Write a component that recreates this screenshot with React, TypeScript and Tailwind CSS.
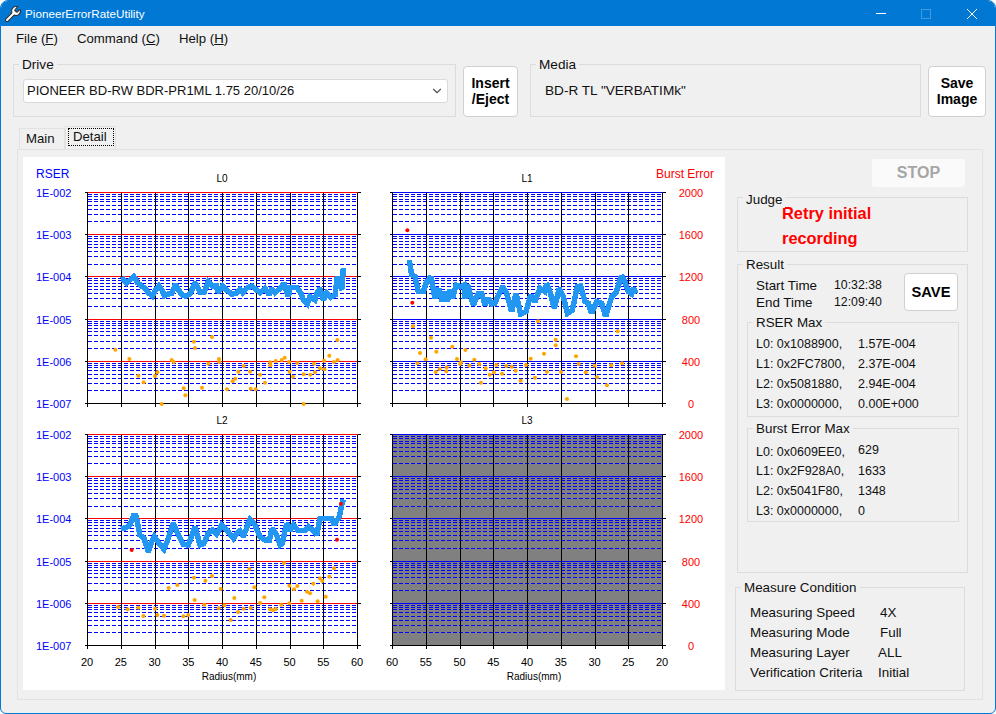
import { ChevronDown, Wrench } from 'lucide-react';
import type { ReactNode } from 'react';

type Pt = [number, number];

// traced from the capture at 3x, so each list is scaled back by its origin
const line0: Pt[] = [[303,360],[310,358],[320,370],[330,360],[342,350],[352,368],[365,378],[375,385],[385,398],[397,408],[407,390],[417,378],[427,392],[433,408],[445,402],[455,400],[467,372],[477,392],[487,405],[497,408],[510,402],[525,368],[535,385],[540,398],[552,398],[565,365],[577,378],[590,378],[593,398],[608,378],[620,390],[635,402],[650,400],[660,388],[668,398],[680,385],[695,378],[710,390],[720,398],[735,385],[748,405],[755,385],[765,398],[780,385],[792,370],[805,410],[810,382],[830,382],[843,400],[850,420],[862,432],[870,410],[885,420],[890,400],[900,385],[910,420],[920,400],[932,412],[945,405],[952,350],[965,390],[970,325]];
const line1: Pt[] = [[118,300],[125,345],[135,350],[145,395],[160,395],[170,365],[183,350],[195,415],[207,385],[217,425],[225,395],[232,425],[240,390],[248,415],[258,375],[272,380],[282,375],[285,415],[293,375],[310,435],[325,400],[335,400],[345,435],[355,415],[365,432],[375,430],[385,405],[398,380],[410,400],[425,455],[438,400],[452,462],[468,455],[482,405],[495,425],[510,385],[525,395],[530,370],[540,395],[553,445],[568,385],[580,410],[592,460],[607,450],[622,380],[632,378],[645,425],[655,430],[665,460],[680,425],[695,430],[707,470],[725,410],[737,400],[755,347],[765,365],[775,395],[785,402],[790,385],[798,400]];
const line2: Pt[] = [[303,357],[320,352],[330,345],[340,318],[348,318],[360,375],[372,385],[385,425],[395,395],[403,380],[415,398],[432,418],[445,385],[460,340],[475,375],[490,403],[505,405],[525,350],[540,405],[552,400],[565,368],[578,360],[590,372],[605,345],[620,360],[640,385],[650,370],[660,362],[670,380],[690,328],[705,345],[720,380],[735,390],[748,390],[757,355],[770,375],[780,405],[787,400],[800,340],[810,362],[820,345],[835,362],[855,362],[865,350],[880,362],[890,375],[900,325],[915,325],[935,325],[942,345],[958,320],[965,285],[970,268]];

const dots0: Pt[] = [[286,569],[328,597],[355,647],[371,667],[405,648],[412,637],[425,732],[455,600],[461,606],[491,685],[496,706],[522,545],[525,564],[546,683],[565,611],[576,531],[597,597],[598,606],[621,688],[638,664],[646,656],[655,635],[671,618],[690,635],[692,686],[707,688],[720,644],[735,668],[751,607],[751,616],[767,603],[785,600],[794,593],[807,606],[809,635],[819,650],[832,609],[851,643],[851,732],[871,644],[882,611],[885,637],[900,625],[912,602],[913,628],[928,587],[942,606],[952,540],[953,600]];
const dots1: Pt[] = [[129,499],[150,579],[142,610],[167,598],[183,533],[199,575],[197,636],[209,627],[230,622],[229,634],[247,560],[261,597],[273,607],[270,612],[286,570],[298,617],[313,599],[328,612],[347,625],[333,668],[359,644],[372,637],[379,615],[396,641],[409,618],[425,620],[437,632],[452,662],[468,615],[482,596],[495,653],[504,484],[522,581],[531,635],[557,539],[557,556],[573,636],[591,717],[618,589],[626,612],[647,637],[674,617],[681,652],[711,676],[724,616],[743,514],[756,610]];
const dots2: Pt[] = [[294,591],[323,598],[355,593],[370,618],[405,596],[412,615],[432,617],[446,534],[472,525],[490,619],[505,615],[522,503],[524,570],[553,584],[556,512],[576,498],[596,595],[602,537],[613,586],[632,630],[643,564],[654,606],[671,596],[688,477],[692,594],[703,532],[720,579],[733,562],[750,598],[759,601],[767,597],[784,584],[792,459],[808,527],[808,580],[822,538],[832,528],[845,572],[861,545],[870,550],[880,521],[893,574],[900,505],[907,513],[917,560],[928,500],[942,475]];

const rserLabels = ['1E-002', '1E-003', '1E-004', '1E-005', '1E-006', '1E-007'];
const burstLabels = ['2000', '1600', '1200', '800', '400', '0'];
const minor = [2, 3, 4, 5, 6, 7, 8, 9];
const font = '"Liberation Sans", Arial, sans-serif';

type ChartProps = {
  title: string;
  // page position of the svg cell
  box: [number, number, number, number];
  plot: { x: number; y: number };
  origin: Pt;
  side: 'left' | 'right';
  ticks: number[];
  decadeColor: string;
  fill?: string;
  line?: Pt[];
  dots?: Pt[];
  red?: Pt[];
  radiusLabel?: boolean;
  heading?: ReactNode;
};

const Chart = ({ title, box, plot, origin, side, ticks, decadeColor, fill, line, dots, red, radiusLabel, heading }: ChartProps) => {
  const W = 270;
  const H = 211;
  const dec = H / 5;
  const sx = (v: number) => origin[0] + v / 3;
  const sy = (v: number) => origin[1] + v / 3;
  const yAt = (i: number) => Math.round(plot.y + i * dec) + 0.5;
  const xAt = (i: number) => Math.round(plot.x + (i * W) / 8) + 0.5;
  const bottom = yAt(5);
  const right = xAt(8);
  const left = xAt(0);

  return (
    <svg
      className="block"
      width={box[2]}
      height={box[3]}
      viewBox={box.join(' ')}
      fontFamily={font}
    >
      <text x={plot.x + 135} y={plot.y - 10.5} fontSize="10" textAnchor="middle" fill="#000">{title}</text>
      {heading}
      {fill && <rect x={left} y={yAt(0)} width={right - left} height={bottom - yAt(0)} fill={fill} />}
      <g shapeRendering="crispEdges">
        {[0, 1, 2, 3, 4].map((d) =>
          minor.map((k) => {
            const y = Math.round(plot.y + (d + 1) * dec - dec * Math.log10(k)) + 0.5;
            return <line key={`${d}-${k}`} x1={left} x2={right} y1={y} y2={y} stroke="#0000ff" strokeDasharray="4 2" />;
          })
        )}
        {[0, 1, 2, 3, 4].map((d) => (
          <line key={d} x1={left} x2={right} y1={yAt(d)} y2={yAt(d)} stroke={decadeColor} />
        ))}
        {[0, 1, 2, 3, 4, 5, 6, 7, 8].map((i) => (
          <line key={i} x1={xAt(i)} x2={xAt(i)} y1={yAt(0)} y2={bottom + 3} stroke="#000" />
        ))}
        <line x1={left - 3} x2={right + 3} y1={bottom} y2={bottom} stroke="#000" />
        {[0, 1, 2, 3, 4].map((d) => (
          <g key={d}>
            <line x1={left - 3} x2={left} y1={yAt(d)} y2={yAt(d)} stroke="#000" />
            <line x1={right} x2={right + 3} y1={yAt(d)} y2={yAt(d)} stroke="#000" />
          </g>
        ))}
      </g>
      {line && (
        <polyline
          points={line.map(([a, b]) => `${sx(a)},${sy(b)}`).join(' ')}
          fill="none"
          stroke="#2196f3"
          strokeWidth="5.5"
          strokeLinejoin="miter"
          strokeMiterlimit="2"
          shapeRendering="crispEdges"
        />
      )}
      {dots?.map(([a, b], i) => <circle key={i} cx={sx(a)} cy={sy(b)} r="2" fill="#ffa500" />)}
      {red?.map(([a, b], i) => <circle key={i} cx={sx(a)} cy={sy(b)} r="2" fill="#ff0000" />)}
      {side === 'left'
        ? rserLabels.map((t, i) => (
            <text key={t} x={36} y={yAt(i) + 4} fontSize="11" fill="#0000ff">{t}</text>
          ))
        : burstLabels.map((t, i) => (
            <text key={t} x={691} y={yAt(i) + 4} fontSize="11" fill="#ff0000" textAnchor="middle">{t}</text>
          ))}
      {radiusLabel &&
        ticks.map((t, i) => (
          <text key={t} x={plot.x + (i * W) / 8} y={665.5} fontSize="11" textAnchor="middle" fill="#000">{t}</text>
        ))}
      {radiusLabel && (
        <text x={plot.x + 142} y={679.5} fontSize="10" textAnchor="middle" fill="#000">Radius(mm)</text>
      )}
    </svg>
  );
};

const Group = ({ label, className, labelClass, children }: { label: string; className: string; labelClass?: string; children?: ReactNode }) => (
  <div className={`relative border border-[#dcdcdc] ${className}`}>
    <span className={`absolute left-[5px] bg-[#f0f0f0] px-[3px] leading-[16px] ${labelClass ?? '-top-[8px]'}`}>{label}</span>
    {children}
  </div>
);

const Underlined = ({ a, k }: { a: string; k: string }) => (
  <span>
    {a} (<span className="underline">{k}</span>)
  </span>
);

const PushButton = ({ className, children }: { className: string; children: ReactNode }) => (
  <button className={`flex items-center justify-center rounded-[4px] border border-[#d0d0d0] bg-white font-bold text-black ${className}`}>
    {children}
  </button>
);

const rser = [
  ['L0: 0x1088900,', '1.57E-004'],
  ['L1: 0x2FC7800,', '2.37E-004'],
  ['L2: 0x5081880,', '2.94E-004'],
  ['L3: 0x0000000,', '0.00E+000'],
];
const burst = [
  ['L0: 0x0609EE0,', '629'],
  ['L1: 0x2F928A0,', '1633'],
  ['L2: 0x5041F80,', '1348'],
  ['L3: 0x0000000,', '0'],
];
const measure = [
  ['Measuring Speed', '4X', 'w-[130px]'],
  ['Measuring Mode', 'Full', 'w-[130px]'],
  ['Measuring Layer', 'ALL', 'w-[128px]'],
  ['Verification Criteria', 'Initial', 'w-[128px]'],
];

const App = () => {
  return (
    <div
      className="flex h-[714px] w-[996px] flex-col overflow-hidden rounded-t-[8px] rounded-b-[6px] border border-[#0078d4] bg-[#f0f0f0] text-[13px] text-[#111]"
      style={{ fontFamily: font }}
    >
      <div className="flex h-[25px] shrink-0 items-center bg-[#0078d4] text-white">
        <Wrench size={18} className="ml-[3px] fill-white text-[#333]" strokeWidth={1.5} />
        <span className="ml-[3px] text-[11.7px]">PioneerErrorRateUtility</span>
        <div className="ml-auto flex items-center">
          <span className="mr-[35px] h-px w-[10px] bg-white" />
          <span className="mr-[36px] h-[10px] w-[10px] border border-[#3f9be0]" />
          <svg className="mr-[18px]" width="10" height="10" viewBox="0 0 10 10" stroke="#fff" fill="none">
            <path d="M0 0 10 10M10 0 0 10" />
          </svg>
        </div>
      </div>

      <div className="flex h-[25px] shrink-0 items-center pl-[15px] text-[13.2px]">
        <span className="w-[61px]"><Underlined a="File" k="F" /></span>
        <span className="w-[102px]"><Underlined a="Command" k="C" /></span>
        <span><Underlined a="Help" k="H" /></span>
      </div>

      <div className="mt-[13px] flex shrink-0 pl-[12px] text-[13.6px]">
        <Group label="Drive" className="h-[53px] w-[443px]">
          <div className="ml-[9px] mt-[14px] flex h-[24px] w-[425px] items-center justify-between rounded-[3px] border border-[#d9d9d9] bg-white pl-[3px] pr-[2px] text-[13px]">
            <span>PIONEER BD-RW BDR-PR1ML 1.75 20/10/26</span>
            <ChevronDown size={14} className="mr-[1px] text-[#555]" />
          </div>
        </Group>
        <PushButton className="ml-[7px] mt-[2px] h-[51px] w-[55px] pb-[2px] leading-[16px] text-[14px]">Insert<br />/Eject</PushButton>
        <Group label="Media" className="ml-[12px] h-[53px] w-[391px]">
          <div className="mt-[16px] pl-[14px]">BD-R TL "VERBATIMk"</div>
        </Group>
        <PushButton className="ml-[7px] mt-[2px] h-[51px] w-[58px] pb-[2px] leading-[16px] text-[14px]">Save<br />Image</PushButton>
      </div>

      <div className="mt-[9px] flex h-[23px] shrink-0 items-end pl-[18px] text-[13.2px]">
        <div className="flex h-[21px] w-[46px] items-center border border-b-0 border-[#e2e2e2] pl-[6px] pb-[1px]">Main</div>
        <div className="flex h-[23px] w-[51px] items-center border border-b-0 border-[#e2e2e2] bg-[#f0f0f0] pl-[2px] pb-[2px]">
          <span className="w-[46px] border border-dotted border-black pl-[4px] leading-[16px]">Detail</span>
        </div>
      </div>

      <div className="ml-[16px] flex h-[551px] w-[966px] shrink-0 border border-[#e2e2e2] pl-[5px] pt-[7px]">
        <div className="grid h-[533px] w-[702px] shrink-0 grid-cols-2 grid-rows-[253px_280px] bg-white">
          <Chart
            title="L0"
            box={[23, 157, 351, 253]}
            plot={{ x: 87, y: 192 }}
            origin={[20, 160]}
            side="left"
            ticks={[]}
            decadeColor="#ff0000"
            line={line0}
            dots={dots0}
            heading={<text x={36} y={178} fontSize="12" fill="#0000ff">RSER</text>}
          />
          <Chart
            title="L1"
            box={[374, 157, 351, 253]}
            plot={{ x: 392, y: 192 }}
            origin={[370, 160]}
            side="right"
            ticks={[]}
            decadeColor="#0000ff"
            line={line1}
            dots={dots1}
            red={[[112, 211], [127, 428]]}
            heading={<text x={656} y={178} fontSize="12" fill="#ff0000">Burst Error</text>}
          />
          <Chart
            title="L2"
            box={[23, 410, 351, 280]}
            plot={{ x: 87, y: 434 }}
            origin={[20, 410]}
            side="left"
            ticks={[20, 25, 30, 35, 40, 45, 50, 55, 60]}
            decadeColor="#ff0000"
            line={line2}
            dots={dots2}
            red={[[335, 420], [951, 389], [963, 281]]}
            radiusLabel
          />
          <Chart
            title="L3"
            box={[374, 410, 351, 280]}
            plot={{ x: 392, y: 434 }}
            origin={[370, 410]}
            side="right"
            ticks={[60, 55, 50, 45, 40, 35, 30, 25, 20]}
            decadeColor="#0000ff"
            fill="#808080"
            radiusLabel
          />
        </div>

        <div className="ml-[12px] flex w-[232px] flex-col text-[13.4px]">
          <button className="ml-[135px] mt-[2px] flex h-[28px] w-[93px] items-center justify-center rounded-[3px] bg-[#fafafa] text-[16px] font-bold text-[#a6a6a6]">STOP</button>

          <Group label="Judge" labelClass="-top-[6px]" className="mt-[10px] h-[55px] w-[231px]">
            <div className="pl-[44px] pt-[3px] text-[16.4px] font-bold leading-[25px] text-[#ff0000]">Retry initial<br />recording</div>
          </Group>

          <Group label="Result" className="mt-[12px] h-[309px] w-[231px]">
            <div className="flex pl-[18px] pt-[11px]">
              <div className="grid w-[148px] grid-cols-[78px_auto] content-start pt-[1px] leading-[17px]">
                <span>Start Time</span><span className="text-[12.3px]">10:32:38</span>
                <span>End Time</span><span className="text-[12.3px]">12:09:40</span>
              </div>
              <PushButton className="-mt-[3px] h-[38px] w-[54px] text-[14.7px]">SAVE</PushButton>
            </div>
            <Group label="RSER Max" className="ml-[9px] mt-[11px] h-[95px] w-[212px]">
              <div className="pl-[8px] pt-[11px] text-[12.5px]">
                {rser.map(([a, b]) => (
                  <div key={a} className="grid h-[20px] grid-cols-[102px_auto] items-center"><span>{a}</span><span>{b}</span></div>
                ))}
              </div>
            </Group>
            <Group label="Burst Error Max" className="ml-[9px] mt-[11px] h-[94px] w-[212px]">
              <div className="pl-[8px] pt-[12px] text-[12.5px]">
                {burst.map(([a, b], i) => (
                  <div key={a} className="grid h-[20px] grid-cols-[102px_auto] items-center">
                    <span>{a}</span>
                    <span className={i === 0 ? 'pb-[3px]' : ''}>{b}</span>
                  </div>
                ))}
              </div>
            </Group>
          </Group>

          <Group label="Measure Condition" className="-ml-[2px] mt-[14px] h-[104px] w-[230px]">
            <div className="pl-[14px] pt-[15px]">
              {measure.map(([a, b, w]) => (
                <div key={a} className="flex h-[20px] items-center">
                  <span className={w}>{a}</span><span>{b}</span>
                </div>
              ))}
            </div>
          </Group>
        </div>
      </div>
    </div>
  );
};

export default App;
